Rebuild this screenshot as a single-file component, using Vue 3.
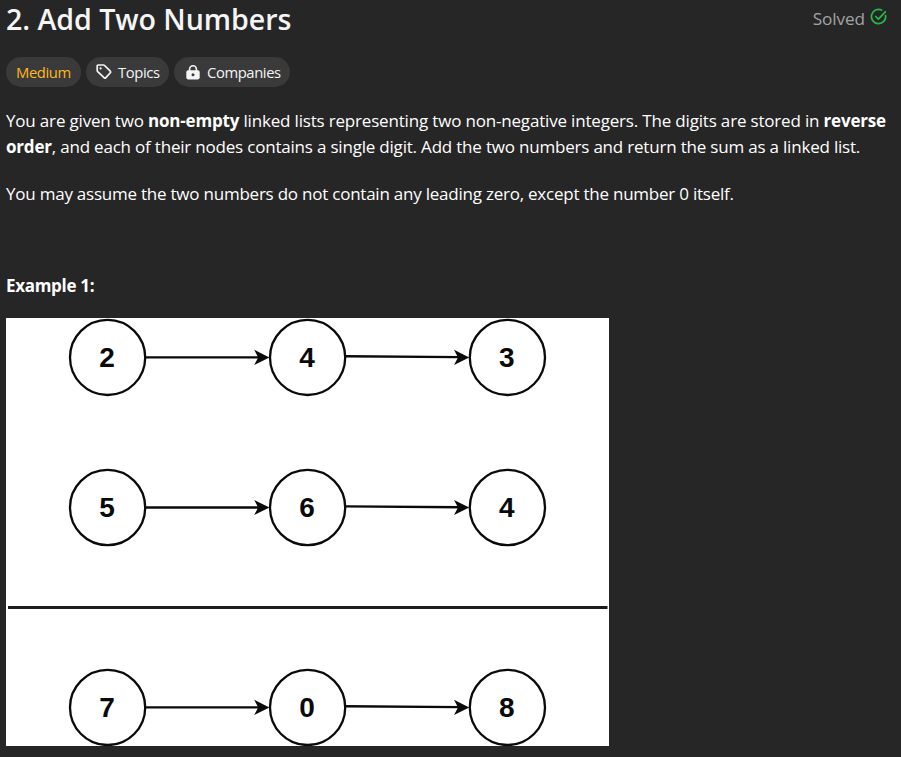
<script setup>
const columns = [101.6, 301.6, 501.4]
const rows = [
  { y: 39.4, digits: [2, 4, 3] },
  { y: 189.5, digits: [5, 6, 4] },
  { y: 389.4, digits: [7, 0, 8] },
]
</script>

<template>
  <main class="page">
    <header class="head">
      <h1>2. Add Two Numbers</h1>
      <div class="solved">
        <span>Solved</span>
        <svg width="18" height="18" viewBox="0 0 18 18" fill="none" stroke="#28b84a" stroke-width="1.7" stroke-linecap="round" stroke-linejoin="round">
          <path d="M11.6 2.1A7.1 7.1 0 1 0 15.6 7.7" />
          <path d="M5.8 8.5l2.6 2.6 6.9-7.2" />
        </svg>
      </div>
    </header>

    <div class="tags">
      <span class="tag medium"><span class="label">Medium</span></span>
      <span class="tag topics">
        <svg width="16" height="16" viewBox="0 0 16 16" fill="none" stroke="#f5f5f5" stroke-width="1.7" stroke-linejoin="round">
          <path d="M1.2 1.8Q1.2 1 2 1H7.5Q8.1 1 8.6 1.5L14.3 7.2Q15 8 14.3 8.7L9.7 13.9Q9 14.6 8.3 13.9L1.7 7.6Q1.2 7.1 1.2 6.5Z" />
          <circle cx="4.6" cy="4.4" r="1.1" fill="#f5f5f5" stroke="none" />
        </svg>
        <span class="label">Topics</span>
      </span>
      <span class="tag companies">
        <svg width="14" height="15" viewBox="0 0 14 15">
          <path d="M3.6 6V4.2a3.4 3.4 0 0 1 6.8 0V6" fill="none" stroke="#f5f5f5" stroke-width="1.6" />
          <rect x="0.3" y="5.2" width="13.4" height="9.2" rx="1.8" fill="#f5f5f5" />
          <circle cx="7" cy="9.8" r="1.5" fill="#3a3a3a" />
        </svg>
        <span class="label">Companies</span>
      </span>
    </div>

    <section class="body">
      <p>
        <span class="line l1">You are given two <strong>non-empty</strong> linked lists representing two non-negative integers. The digits are stored in <strong>reverse</strong></span>
        <span class="line l2"><strong>order</strong>, and each of their nodes contains a single digit. Add the two numbers and return the sum as a linked list.</span>
      </p>
      <p><span class="line l3">You may assume the two numbers do not contain any leading zero, except the number 0 itself.</span></p>
    </section>

    <h2><span>Example 1:</span></h2>

    <svg class="diagram" width="603" height="428" viewBox="0 0 603 428">
      <rect width="603" height="428" fill="#fff" />
      <g v-for="row in rows" :key="row.y">
        <template v-for="(digit, i) in row.digits" :key="i">
          <circle :cx="columns[i]" :cy="row.y" r="37.6" fill="none" stroke="#0a0a0a" stroke-width="2.3" />
          <text :x="columns[i] - 0.5" :y="row.y + 9.6" text-anchor="middle">{{ digit }}</text>
        </template>
        <g v-for="i in 2" :key="'arrow' + i">
          <line :x1="columns[i - 1] + 38" :y1="row.y + (i === 2 ? -1.1 : 0)" :x2="columns[i] - 48" :y2="row.y + (i === 2 ? -0.3 : 0)" stroke="#0a0a0a" stroke-width="2.4" />
          <path :transform="`translate(${columns[i] - 38.2} ${row.y})`" d="M0 0L-15.2 7.6L-11.2 0L-15.2 -7.6Z" fill="#0a0a0a" />
        </g>
      </g>
      <line x1="2" y1="289.5" x2="601.5" y2="289.5" stroke="#1c1c1c" stroke-width="2.8" />
    </svg>
  </main>
</template>

<style>
body {
  margin: 0;
  background: #262626;
}
</style>

<style scoped>
.page {
  box-sizing: border-box;
  width: 901px;
  height: 757px;
  padding: 0 6px;
  background: #262626;
  color: #fff;
  font-family: "Open Sans", "Noto Sans", sans-serif;
}
.head {
  display: flex;
  justify-content: space-between;
  height: 57px;
}
h1 {
  margin: 0;
  font-size: 28.6px;
  line-height: 37px;
  font-weight: 600;
  letter-spacing: -0.05px;
  color: #f5f5f5;
  white-space: nowrap;
}
.solved {
  display: flex;
  align-items: center;
  height: 36px;
  gap: 5px;
  padding-right: 7px;
  font-size: 17.2px;
  letter-spacing: -0.1px;
  line-height: 25px;
  color: #a3a3a3;
}
.solved svg {
  margin-top: -3px;
}
.tags {
  display: flex;
  gap: 5px;
  height: 30px;
}
.tag {
  box-sizing: border-box;
  display: flex;
  align-items: center;
  height: 30px;
  padding-left: 10px;
  border-radius: 15px;
  background: #3a3a3a;
  color: #f5f5f5;
  font-size: 14.8px;
  line-height: 30px;
  letter-spacing: -0.4px;
  white-space: nowrap;
}
.medium {
  width: 75px;
  color: #ffb81c;
}
.topics {
  width: 83px;
  gap: 6px;
}
.companies {
  width: 116px;
  padding-left: 12px;
  gap: 7px;
}
.body {
  padding-top: 21px;
}
p {
  margin: 0 0 21px;
  font-size: 17px;
  line-height: 26px;
}
.line {
  display: block;
  width: max-content;
  white-space: nowrap;
}
h2 {
  margin: 66px 0 19px;
  font-size: 17px;
  line-height: 26px;
  font-weight: 700;
  letter-spacing: -0.3px;
}
.diagram {
  display: block;
}
.diagram text {
  font: 700 28px "Liberation Sans", sans-serif;
  fill: #0a0a0a;
}
.l1 {
  letter-spacing: -0.18px;
}
.l2 {
  letter-spacing: -0.2px;
}
.l3 {
  letter-spacing: -0.23px;
}
</style>
